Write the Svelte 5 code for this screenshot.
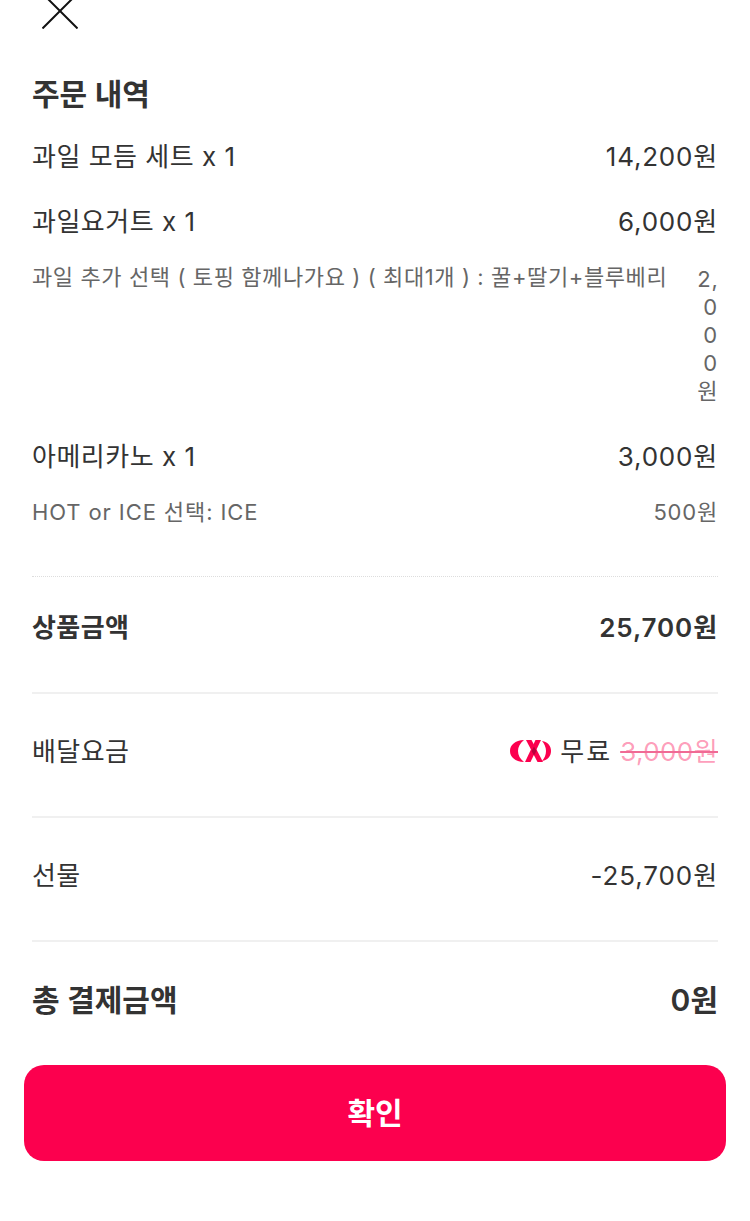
<script lang="ts">
  type Row = { label: string; price: string; sub?: boolean; latin?: boolean };

  const items: Row[] = [
    { label: '과일 모듬 세트 x 1', price: '14,200원' },
    { label: '과일요거트 x 1', price: '6,000원' },
    { label: '과일 추가 선택 ( 토핑 함께나가요 ) ( 최대1개 ) : 꿀+딸기+블루베리', price: '2,000원', sub: true },
    { label: '아메리카노 x 1', price: '3,000원' },
    { label: 'HOT or ICE 선택: ICE', price: '500원', sub: true, latin: true }
  ];
</script>

<main class="sheet">
  <header class="top">
    <svg class="close" width="36" height="36" viewBox="0 0 36 36" aria-label="닫기">
      <path d="M0.5 0.5 L35.5 35.5 M35.5 0.5 L0.5 35.5" stroke="#111" stroke-width="2" fill="none" />
    </svg>
  </header>

  <section class="order">
    <h2>주문 내역</h2>
    {#each items as item}
      <div class="item" class:sub={item.sub} class:latin={item.latin}>
        <span class="name">{item.label}</span>
        <span class="price">{item.price}</span>
      </div>
    {/each}
  </section>

  <div class="summary dotted strong">
    <span>상품금액</span>
    <span class="amount">25,700원</span>
  </div>

  <div class="summary">
    <span>배달요금</span>
    <span class="fee">
      <svg width="41" height="22" viewBox="0 0 41 22" aria-hidden="true">
        <path d="M14 0 C5 0.500 0 5 0 11 C0 17 5 21.500 14 22 C10 19 8 15 8 11 C8 7 10 3 14 0 Z" fill="#fc004e" />
        <path d="M32 1 C38 2 41 6 41 11 C41 16 38 20 32 21 C34.500 18 36 15 36 11 C36 7 34.500 4 32 1 Z" fill="#fc004e" />
        <path d="M16 0 L21.500 0 L33 22 L27.500 22 Z" fill="#fc004e" />
        <path d="M31 0 L25.500 0 L15 22 L20.500 22 Z" fill="#fc004e" />
        <path d="M24 6.500 L26.500 11 L24 15.500 L21.500 11 Z" fill="#b8003c" />
      </svg>
      <span class="free">무료</span>
      <s>3,000원</s>
    </span>
  </div>

  <div class="summary">
    <span>선물</span>
    <span class="amount">-25,700원</span>
  </div>

  <div class="total">
    <span>총 결제금액</span>
    <span>0원</span>
  </div>

  <button type="button">확인</button>
</main>

<style>
  :global(body) {
    background: #fff;
  }

  .sheet {
    height: 1221px;
    overflow: hidden;
    font-family: Inter, "Noto Sans CJK KR", "Noto Sans", sans-serif;
    color: #333;
    display: flex;
    flex-direction: column;
    margin-top: -7px;
  }

  .top {
    padding: 0 0 0 42px;
    height: 36px;
  }

  .close {
    display: block;
  }

  .order {
    padding: 43px 32px 16px;
    display: flex;
    flex-direction: column;
  }

  h2 {
    margin: 0 0 21px;
    font-size: 30px;
    line-height: 44px;
    font-weight: 600;
  }

  .item {
    display: flex;
    justify-content: space-between;
    gap: 30px;
    font-size: 26px;
    line-height: 40px;
    letter-spacing: 0.5px;
    margin-bottom: 25px;
  }

  .item .name {
    flex: none;
  }

  .item .price {
    min-width: 0;
    text-align: right;
    word-break: break-all;
    letter-spacing: 0.8px;
  }

  .item.sub {
    font-size: 22px;
    line-height: 28px;
    letter-spacing: 0.6px;
    color: #666;
    margin-top: -4px;
    margin-bottom: 32px;
  }

  .item.sub .price {
    padding-top: 2px;
  }

  .item.latin {
    letter-spacing: 0.9px;
    margin-bottom: 34px;
  }

  .item.latin .price {
    padding-top: 0;
  }

  .summary {
    margin: 0 32px;
    height: 110px;
    padding-bottom: 12px;
    border-top: 2px solid #f0f0f0;
    display: flex;
    justify-content: space-between;
    align-items: center;
    font-size: 26px;
    letter-spacing: 0.4px;
  }

  .summary.dotted {
    border-top: 1px dotted #ddd;
    height: 97px;
    padding-bottom: 18px;
  }

  .strong {
    font-weight: 600;
  }

  .amount {
    letter-spacing: 0.9px;
  }

  .fee {
    display: flex;
    align-items: center;
    gap: 8px;
  }

  .fee svg {
    margin-top: 4px;
    margin-right: 1px;
  }

  .free {
    letter-spacing: 2px;
  }

  .fee s {
    color: rgba(252, 0, 78, 0.4);
    text-decoration-color: #f06a94;
  }

  .total {
    margin: 0 32px;
    padding-top: 35px;
    border-top: 2px solid #f0f0f0;
    display: flex;
    justify-content: space-between;
    font-size: 30px;
    line-height: 46px;
    font-weight: 600;
  }

  button {
    margin: 42px 24px 0;
    height: 96px;
    padding-bottom: 6px;
    flex: none;
    border: 0;
    border-radius: 20px;
    background: #fc004e;
    color: #fff;
    font: 600 30px "Noto Sans CJK KR", "Noto Sans", sans-serif;
  }
</style>
